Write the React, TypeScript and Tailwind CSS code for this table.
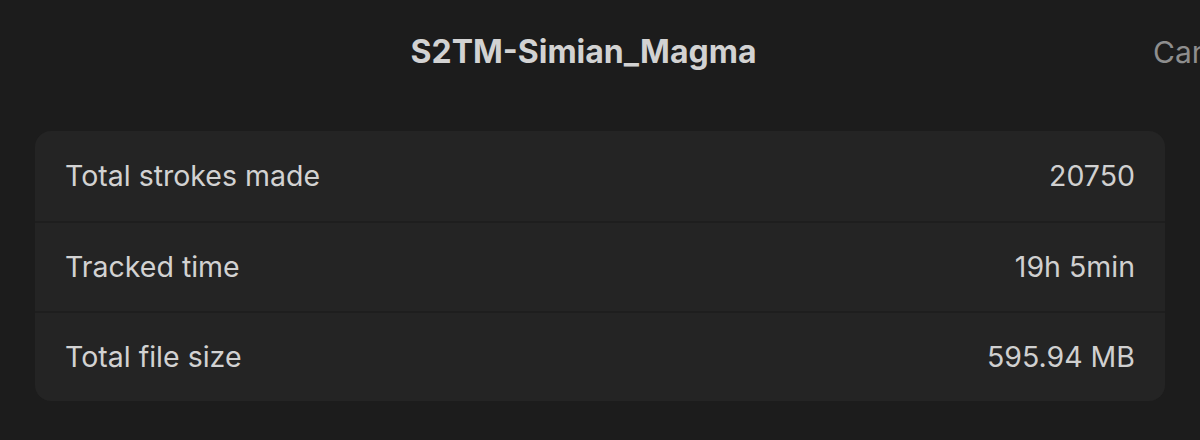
import React from "react";

export default function App() {
  const stats = [
    { label: "Total strokes made", value: "20750" },
    { label: "Tracked time", value: "19h 5min" },
    { label: "Total file size", value: "595.94 MB" },
  ];
  return (
    <div
      className="w-[1200px] h-[440px] overflow-hidden bg-[#1c1c1c] text-[#d2d2d2]"
      style={{ fontFamily: "Inter, 'Noto Sans', sans-serif" }}
    >
      <header className="flex items-center h-[104px] pl-[14px]">
        <h1 className="flex-1 text-center text-[32px] font-bold text-[#d2d2d2]">
          S2TM-Simian_Magma
        </h1>
        <button className="shrink-0 w-[47px] overflow-visible whitespace-nowrap text-left text-[30px] text-[#8e8e8e]">
          Cancel
        </button>
      </header>
      <main className="px-[35px] pt-[27px]">
        <section className="rounded-[16px] bg-[#242424] overflow-hidden">
          {stats.map((s, idx) => (
            <div
              key={idx}
              className={
                "flex items-center justify-between h-[90px] px-[30px] text-[28.5px] " +
                (idx > 0 ? "border-t-2 border-[#1e1e1e]" : "")
              }
            >
              <span>{s.label}</span>
              <span className="text-[#d0d0d0]">{s.value}</span>
            </div>
          ))}
        </section>
      </main>
    </div>
  );
}
